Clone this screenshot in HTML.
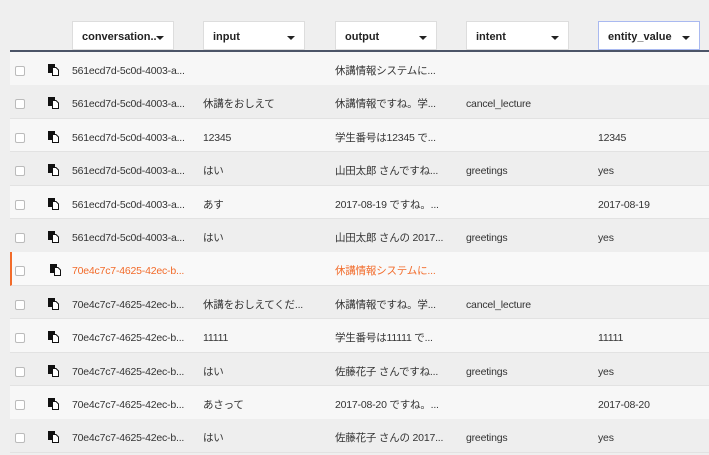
<!DOCTYPE html>
<html><head><meta charset="utf-8"><style>
*{box-sizing:border-box;margin:0;padding:0}
body{width:709px;height:451px;overflow:hidden;background:#efefef;font-family:"Liberation Sans","Noto Sans CJK JP",sans-serif;font-size:10.5px;color:#333;position:relative}
.hb{position:absolute;top:21px;height:29px;background:#fff;border:1px solid #ddd;font-weight:bold;font-size:11px;color:#222;padding-left:9px;line-height:31px}
.hb .ar{position:absolute;right:9px;top:14px;width:0;height:0;border-left:4px solid transparent;border-right:4px solid transparent;border-top:4px solid #222}
.hb.sel{border-color:#a9b9f0}
.hl{position:absolute;left:10px;right:0;top:50px;height:2px;background:#4c5568}
.row{position:absolute;left:10px;right:0;height:33.5px;border-bottom:1px solid #e2e2e2}
.row.a{background:#f7f7f7}.row.b{background:#eeeeee}
.row.s{background:#f9f9f9;border-left:2px solid #f26b2a}
.cb{position:absolute;left:5px;top:14px;width:10px;height:10px;border:1px solid #bbb;border-radius:2px;background:#fff}
.ic{position:absolute;left:38px;top:12px;width:11px;height:12px}
.c{position:absolute;top:3px;line-height:33px;white-space:nowrap;letter-spacing:-0.2px}
.s .c{color:#f26b2a}
</style></head><body>
<div class="hb" style="left:72px;width:102px">conversation..<span class="ar"></span></div>
<div class="hb" style="left:203px;width:102px">input<span class="ar"></span></div>
<div class="hb" style="left:335px;width:102px">output<span class="ar"></span></div>
<div class="hb" style="left:466px;width:103px">intent<span class="ar"></span></div>
<div class="hb sel" style="left:598px;width:102px">entity_value<span class="ar"></span></div>
<div class="hl"></div>
<div id="rows"></div>
<script>
var d=[
["a","561ecd7d-5c0d-4003-a...","","休講情報システムに...","",""],
["b","561ecd7d-5c0d-4003-a...","休講をおしえて","休講情報ですね。学...","cancel_lecture",""],
["a","561ecd7d-5c0d-4003-a...","12345","学生番号は12345 で...","","12345"],
["b","561ecd7d-5c0d-4003-a...","はい","山田太郎 さんですね...","greetings","yes"],
["a","561ecd7d-5c0d-4003-a...","あす","2017-08-19 ですね。...","","2017-08-19"],
["b","561ecd7d-5c0d-4003-a...","はい","山田太郎 さんの 2017...","greetings","yes"],
["s","70e4c7c7-4625-42ec-b...","","休講情報システムに...","",""],
["b","70e4c7c7-4625-42ec-b...","休講をおしえてくだ...","休講情報ですね。学...","cancel_lecture",""],
["a","70e4c7c7-4625-42ec-b...","11111","学生番号は11111 で...","","11111"],
["b","70e4c7c7-4625-42ec-b...","はい","佐藤花子 さんですね...","greetings","yes"],
["a","70e4c7c7-4625-42ec-b...","あさって","2017-08-20 ですね。...","","2017-08-20"],
["b","70e4c7c7-4625-42ec-b...","はい","佐藤花子 さんの 2017...","greetings","yes"]];
var h="",xs=[62,193,325,456,588];
var icon='<svg class="ic" viewBox="0 0 11 12"><rect x="0" y="0" width="7" height="9" fill="#111"/><path d="M4.5 3.5h3.5l2.5 2.5v5.5h-6z" fill="#fff" stroke="#111" stroke-width="1"/></svg>';
d.forEach(function(r,i){
 var top=52+i*33.4;
 var s='<div class="row '+r[0]+'" style="top:'+top+'px"><div class="cb"'+(r[0]=="s"?' style="left:3px"':'')+'></div>'+icon;
 for(var j=1;j<6;j++){ if(r[j]) s+='<div class="c" style="left:'+(xs[j-1]-(r[0]=="s"?2:0))+'px">'+r[j]+'</div>'; }
 h+=s+'</div>';
});
document.getElementById("rows").innerHTML=h;
</script>
</body></html>
